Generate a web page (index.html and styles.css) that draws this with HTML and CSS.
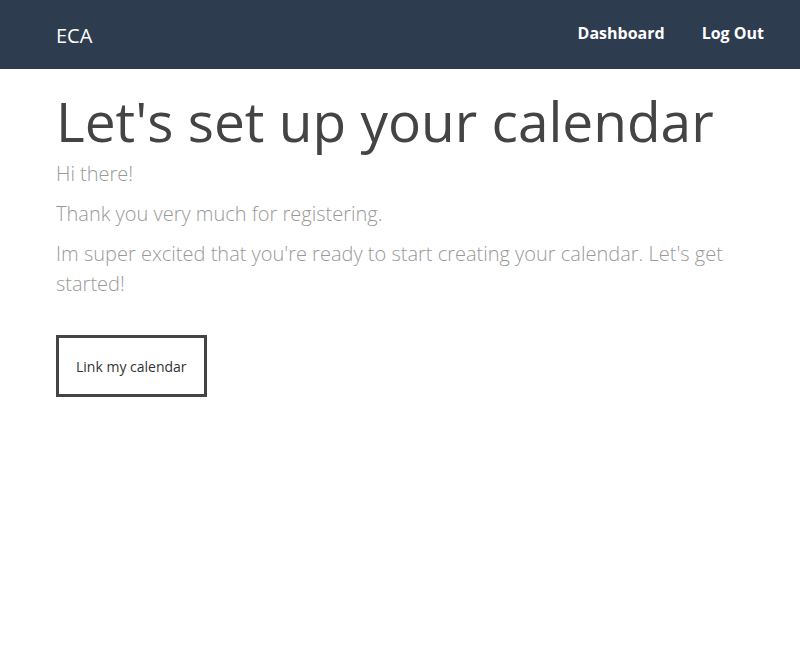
FILE: index.html
```html
<!DOCTYPE html>
<html lang="en">
<head>
<meta charset="utf-8">
<title>ECA</title>
<link rel="stylesheet" href="styles.css">
</head>
<body>
<header class="topbar">
  <a class="brand" href="#">ECA</a>
  <nav class="nav">
    <a class="nav-link" href="#">Dashboard</a>
    <a class="nav-link" href="#">Log Out</a>
  </nav>
</header>
<main class="content">
  <h1 class="title">Let's set up your calendar</h1>
  <p class="lead">Hi there!</p>
  <p class="lead">Thank you very much for registering.</p>
  <p class="lead">Im super excited that you're ready to start creating your calendar. Let's get started!</p>
  <a class="btn" href="#">Link my calendar</a>
</main>
</body>
</html>
```
FILE: styles.css
```css
* { box-sizing: border-box; }
html, body { margin: 0; padding: 0; }
body {
  font-family: "Open Sans", "Noto Sans", sans-serif;
  background: #fff;
  color: #444;
}
a { text-decoration: none; }
.topbar {
  height: 69px;
  background: #2e3c4f;
  display: flex;
  align-items: center;
  justify-content: space-between;
  padding: 0 36px 0 56px;
}
.brand {
  color: #fff;
  font-size: 20px;
  font-weight: 400;
  margin-top: 2px;
}
.nav {
  display: flex;
  gap: 37px;
  margin-top: -4px;
}
.nav-link {
  color: #fff;
  font-size: 16px;
  font-weight: 700;
}
.content {
  padding: 0 56px;
}
.title {
  font-size: 55px;
  font-weight: 400;
  color: #444;
  margin: 17px 0 3px;
  line-height: 70px;
}
.lead {
  font-size: 20px;
  font-weight: 300;
  color: #999;
  line-height: 30px;
  margin: 0 0 10px;
}
.btn {
  display: inline-block;
  margin-top: 26px;
  border: 3px solid #444;
  color: #333;
  font-size: 14px;
  padding: 19px 17px 17px;
  line-height: 20px;
}
```
